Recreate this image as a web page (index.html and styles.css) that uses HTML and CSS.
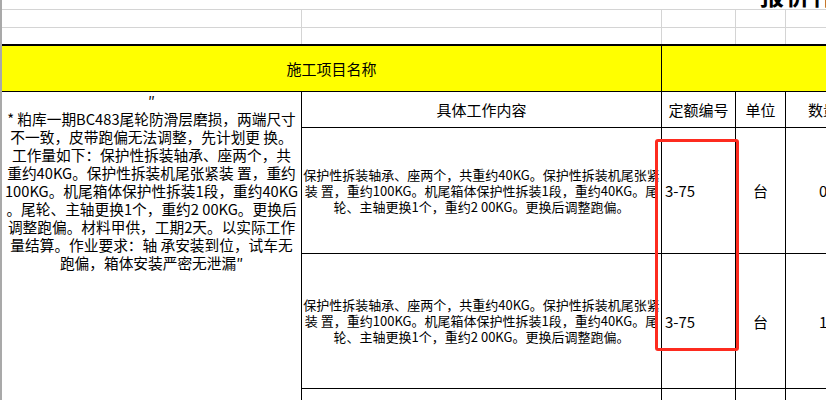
FILE: index.html
```html
<!DOCTYPE html>
<html lang="zh-CN">
<head>
<meta charset="utf-8">
<title>报价作业表</title>
<link rel="stylesheet" href="styles.css">
</head>
<body>
<div class="sheet">
  <div class="title-row"><span class="title">报价作业表</span></div>

  <div class="blank-grid">
    <div class="g"></div><div class="g"></div><div class="g"></div><div class="g"></div><div class="g"></div><div class="g"></div>
    <div class="g"></div><div class="g"></div><div class="g"></div><div class="g"></div><div class="g"></div><div class="g"></div>
  </div>

  <div class="band">
    <div class="band-cell">施工项目名称</div>
    <div class="band-cell"></div>
  </div>

  <div class="body-grid">
    <div class="c colA">
      <div class="desc">″<br>* 粕库一期BC483尾轮防滑层磨损，两端尺寸<br>不一致，皮带跑偏无法调整，先计划更 换。<br>工作量如下：保护性拆装轴承、座两个，共<br>重约40KG。保护性拆装机尾张紧装 置，重约<br>100KG。机尾箱体保护性拆装1段，重约40KG<br>。尾轮、主轴更换1个，重约2 00KG。更换后<br>调整跑偏。材料甲供，工期2天。以实际工作<br>量结算。作业要求：轴 承安装到位，试车无<br>跑偏，箱体安装严密无泄漏″</div>
    </div>

    <div class="c head">具体工作内容</div>
    <div class="c head">定额编号</div>
    <div class="c head">单位</div>
    <div class="c head">数量</div>
    <div class="c"></div>

    <div class="c"><div class="work">保护性拆装轴承、座两个，共重约40KG。保护性拆装机尾张紧<br>装 置，重约100KG。机尾箱体保护性拆装1段，重约40KG。尾<br>轮、主轴更换1个，重约2 00KG。更换后调整跑偏。</div></div>
    <div class="c code">3-75</div>
    <div class="c val">台</div>
    <div class="c qty">0.5</div>
    <div class="c"></div>

    <div class="c"><div class="work">保护性拆装轴承、座两个，共重约40KG。保护性拆装机尾张紧<br>装 置，重约100KG。机尾箱体保护性拆装1段，重约40KG。尾<br>轮、主轴更换1个，重约2 00KG。更换后调整跑偏。</div></div>
    <div class="c code">3-75</div>
    <div class="c val">台</div>
    <div class="c qty">1</div>
    <div class="c"></div>

    <div class="c"></div>
    <div class="c"></div>
    <div class="c"></div>
    <div class="c"></div>
    <div class="c"></div>
  </div>

  <div class="redbox"></div>
</div>
</body>
</html>
```

FILE: styles.css
```css
html, body {
  margin: 0;
  padding: 0;
  overflow: hidden;
  background: #fff;
}

body {
  font-family: "Noto Sans CJK SC", "Noto Sans", sans-serif;
  color: #000;
}

.sheet {
  position: relative;
  width: 930px;
  height: 400px;
  overflow: hidden;
  border-left: 2px solid #a9a9a9;
}

.title-row {
  height: 9px;
  border-bottom: 1px solid #d4d4d4;
  overflow: hidden;
  display: flex;
  align-items: flex-end;
  padding-left: 758px;
}

.title {
  font-size: 24px;
  line-height: 24px;
  font-weight: 700;
  letter-spacing: 2px;
  white-space: nowrap;
  margin-bottom: 2px;
}

.blank-grid {
  display: grid;
  grid-template-columns: 299px 359px 73px 49px 74px 1fr;
  grid-template-rows: 17px 16px;
  gap: 1px;
  background: #d4d4d4;
}

.g {
  background: #fff;
}

.band {
  display: grid;
  grid-template-columns: 659px 1fr;
  height: 45px;
  gap: 1px;
  background: #000;
  border-top: 2px solid #000;
  border-bottom: 1px solid #000;
}

.band-cell {
  background: #ffff00;
  display: flex;
  align-items: center;
  justify-content: center;
  font-size: 15px;
}

.body-grid {
  display: grid;
  grid-template-columns: 299px 359px 73px 49px 74px 1fr;
  grid-template-rows: 35px 125px 134px 40px;
  gap: 1px;
  background: #000;
}

.c {
  background: #fff;
  display: flex;
  align-items: center;
  justify-content: center;
  overflow: hidden;
  white-space: nowrap;
  font-size: 15px;
}

.colA {
  grid-row: 1 / -1;
  display: block;
  text-align: center;
}

.desc {
  font-size: 14.7px;
  line-height: 18px;
  text-align: center;
  white-space: nowrap;
}

.work {
  font-size: 13px;
  line-height: 16px;
  text-align: center;
  white-space: nowrap;
}

.code {
  justify-content: flex-start;
  padding-left: 3px;
}

.qty {
  justify-content: flex-start;
  padding-left: 33px;
}

.redbox {
  position: absolute;
  left: 653px;
  top: 139px;
  width: 84px;
  height: 212px;
  box-sizing: border-box;
  border: 3px solid #fd2b1f;
  border-radius: 3px;
}
```
